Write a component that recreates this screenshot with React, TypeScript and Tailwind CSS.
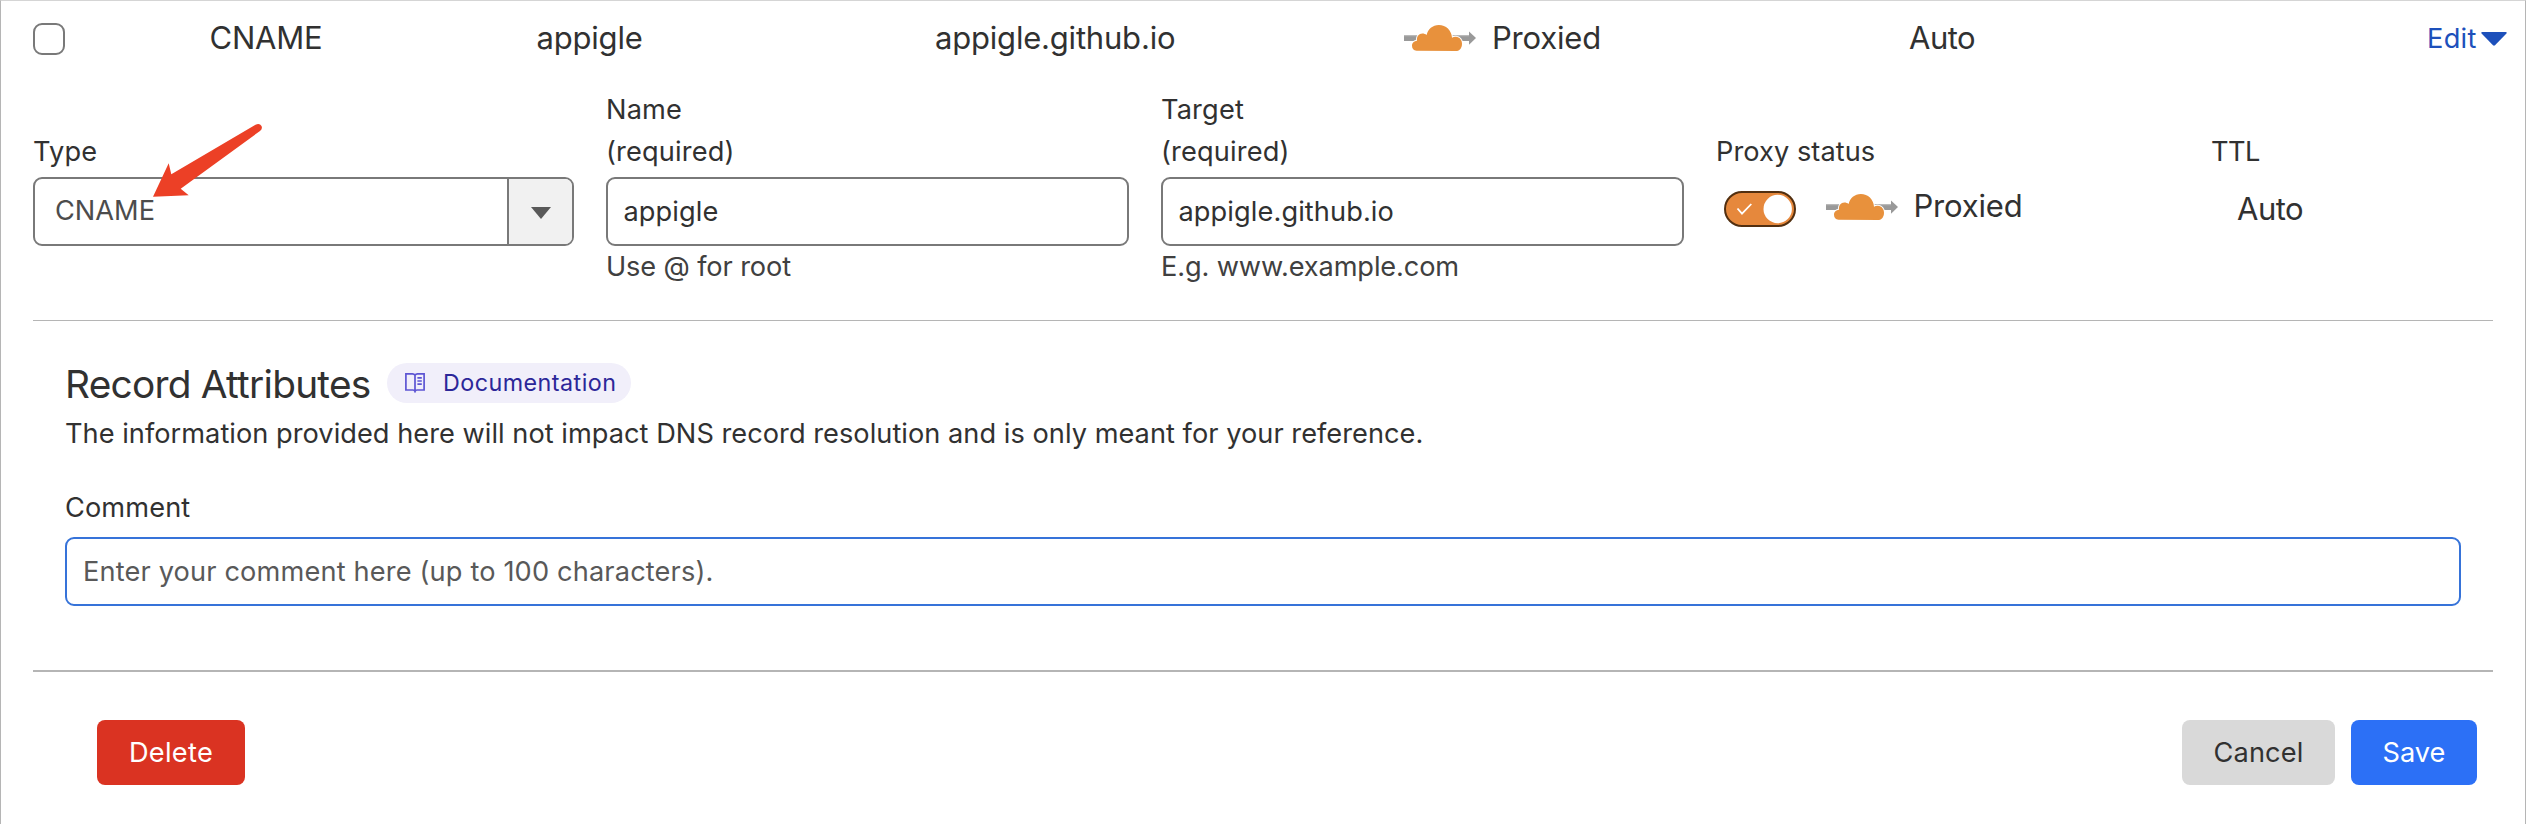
import React from "react";

function ProxyCloud() {
  return (
    <svg className="h-[28px] w-[72px] shrink-0" viewBox="0 -1 72 28">
      <path d="M0 10H66V16H0Z" fill="#999" />
      <path d="M0 10H66V11.3H0Z" fill="#b9b9b9" />
      <path d="M65 6.5L72 13L65 19.7Z" fill="#999" />
      <path
        d="M12.5 25.8C9.7 25.5 8 23.5 8 20.7C8 17.9 10.2 15.9 13 15.7C12.4 11.5 15 8.5 18.3 8.5C20 8.5 21.5 9 22.6 10C23.8 4.3 28.7 0 34.8 0C42 0 47.6 5.4 48 12.7C49.2 12 50.5 11.7 52 11.8C55.6 12 58 15 58 18.8C58 22.6 56 25.6 53 26Z"
        fill="#e8913c"
        stroke="#fff"
        strokeWidth="2"
        paintOrder="stroke"
      />
    </svg>
  );
}

function BookIcon() {
  return (
    <svg className="h-[20px] w-[20px] shrink-0" viewBox="0 0 20 20" fill="none" stroke="#5d55d3" strokeWidth="1.7">
      <path d="M10 2.2C9.4 1.2 8.6 .9 7.5 .9H.9V17H8C9 17 9.6 17.4 10 18.4C10.4 17.4 11 17 12 17H19.1V.9H12.5C11.4 .9 10.6 1.2 10 2.2V18.8" />
      <path d="M12.4 4.8H16.8M12.4 8H16.8M12.4 11.2H16.8" />
    </svg>
  );
}

function Label({ children }: { children: React.ReactNode }) {
  return <label className="block leading-[42px] tracking-[0.15px]">{children}</label>;
}

function Field({ label, value, hint }: { label: string; value: string; hint: string }) {
  return (
    <div className="w-[523px]">
      <Label>{label}</Label>
      <Label>(required)</Label>
      <input
        defaultValue={value}
        className="mt-1 block h-[69px] w-full rounded-[9px] border-2 border-[#797979] bg-white px-[15.5px] tracking-[0.1px] text-[#313131]"
      />
      <p className="leading-[42px] tracking-[-0.13px] text-[#404040]">{hint}</p>
    </div>
  );
}

export default function App() {
  return (
    <div className="relative h-[824px] w-[2526px] overflow-hidden border-x border-t border-x-[#b5b5b5] border-t-[#d5d5d5] bg-white font-['Inter',sans-serif] text-[27.2px] text-[#313131]">
      <div className="flex h-[74px] items-center pl-8 text-[31px] tracking-[-0.2px]">
        <div className="w-[176.5px]">
          <div className="mt-[2px] h-8 w-8 rounded-[9px] border-2 border-[#797979]" />
        </div>
        <div className="w-[327px]">CNAME</div>
        <div className="w-[398.5px]">appigle</div>
        <div className="w-[469px]">appigle.github.io</div>
        <div className="flex w-[505px] items-center gap-[16px]">
          <ProxyCloud />
          <span>Proxied</span>
        </div>
        <div className="w-[518px] tracking-[-0.5px]">Auto</div>
        <div className="flex items-center gap-[4px] pt-[2px] text-[27.2px] tracking-[0.3px] text-[#1d50bb]">
          <span>Edit</span>
          <svg className="h-[14px] w-[26px]" viewBox="0 0 26 14">
            <path d="M1.4 0H24.6Q26.6 .2 25.2 1.8L14 13.3Q13 14.2 12 13.3L.8 1.8Q-.6 .2 1.4 0Z" fill="#1d50bb" />
          </svg>
        </div>
      </div>

      <div className="mt-[14px] flex items-start gap-8 pl-8">
        <div className="w-[541px] pt-[42px]">
          <Label>Type</Label>
          <div className="mt-1 flex h-[69px] overflow-hidden rounded-[9px] border-2 border-[#797979]">
            <div className="flex flex-1 items-center pl-[20px] text-[#4c4c4c]">CNAME</div>
            <div className="flex w-[65px] items-center justify-center border-l-2 border-[#797979] bg-[#f1f1f1]">
              <svg className="mt-[2px] h-3 w-5" viewBox="0 0 20 12">
                <path d="M0 0H20L10 12Z" fill="#595959" />
              </svg>
            </div>
          </div>
        </div>
        <Field label="Name" value="appigle" hint="Use @ for root" />
        <Field label="Target" value="appigle.github.io" hint="E.g. www.example.com" />
        <div className="w-[463px] pt-[42px]">
          <div className="leading-[42px] tracking-[0.05px]">Proxy status</div>
          <div className="flex items-start pt-[18px] pl-2">
            <svg className="h-9 w-[72px]" viewBox="0 0 72 36">
              <rect x="1" y="1" width="70" height="34" rx="17" fill="#e6883c" stroke="#522f10" strokeWidth="2" />
              <path d="M13.5 17.5L18 22.7L27.3 13" fill="none" stroke="#fff" strokeWidth="1.8" />
              <circle cx="53.7" cy="18" r="14.2" fill="#fff" />
            </svg>
            <div className="flex h-[30px] items-center gap-[15.5px] pl-[30px] text-[31px] tracking-[-0.2px]">
              <div className="mt-[2px]">
                <ProxyCloud />
              </div>
              <span>Proxied</span>
            </div>
          </div>
        </div>
        <div className="pt-[42px]">
          <div className="leading-[42px] tracking-[-0.5px]">TTL</div>
          <div className="mt-[15px] pl-[26px] text-[31px] leading-[42px] tracking-[-0.5px]">Auto</div>
        </div>
      </div>

      <div className="mx-8 mt-8 h-px bg-[#b5b5b5]" />

      <div className="px-16">
        <div className="mt-[42px] flex h-10 items-center">
          <h2 className="w-[322px] pt-[2px] text-[38.8px] leading-[40px] tracking-[-0.75px] whitespace-nowrap">Record Attributes</h2>
          <a className="flex h-10 w-[244px] items-center rounded-full bg-[#f1effa] pl-[18px] text-[23.3px] tracking-[0.46px] text-[#2c2799]">
            <BookIcon />
            <span className="pl-[18px]">Documentation</span>
          </a>
        </div>
        <p className="mt-[10px] leading-[42px] tracking-[0.03px]">
          The information provided here will not impact DNS record resolution and is only meant for your reference.
        </p>
        <div className="mt-8 leading-[42px] tracking-[0.1px]">Comment</div>
        <input
          placeholder="Enter your comment here (up to 100 characters)."
          className="mt-2 block h-[69px] w-full rounded-[9px] border-2 border-[#3673d9] bg-white px-[16px] tracking-[0.15px] placeholder:text-[#595959]"
        />
      </div>

      <div className="mx-8 mt-16 h-[2px] bg-[#b5b5b5]" />

      <div className="mt-12 flex h-[65px] gap-4 pr-12 pl-24">
        <button className="mr-auto w-[148px] rounded-[8px] bg-[#da3322] pt-[2px] tracking-[0.3px] text-white">Delete</button>
        <button className="w-[153px] rounded-[8px] bg-[#d9d9d9] pt-[2px] tracking-[0.1px]">Cancel</button>
        <button className="w-[126px] rounded-[8px] bg-[#2c70f6] pt-[2px] text-white">Save</button>
      </div>

      <svg className="absolute top-[119px] left-[149px] h-[80px] w-[120px]" viewBox="150 120 120 80">
        <path d="M153 196.7L168.7 163.3L171.3 174.3L255.5 124.8Q259.5 122.8 261.5 126Q262.8 129 260 131L180.7 188.7L188.7 195.3Z" fill="#ec4026" />
      </svg>
    </div>
  );
}
